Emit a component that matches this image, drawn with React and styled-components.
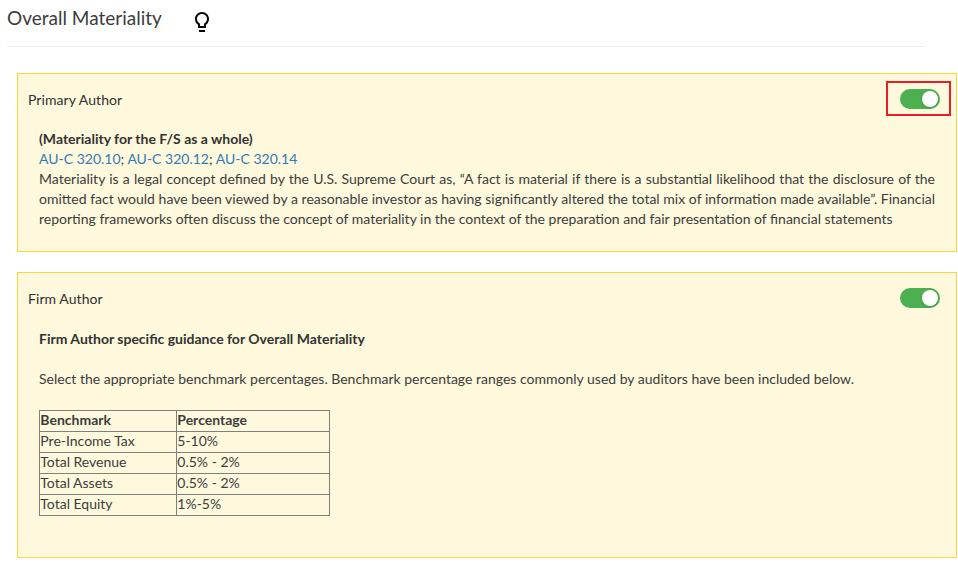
import React from "react";
import styled, { createGlobalStyle } from "styled-components";

const GlobalStyle = createGlobalStyle`
  *, *::before, *::after { box-sizing: border-box; }
  body { margin: 0; background: #fff; color: #3c3c3c; font: 14px/20px Lato, sans-serif; overflow: hidden; }
`;
const Page = styled.main`
  width: 958px;
  height: 562px;
`;
const Header = styled.header`
  display: flex;
  width: 918px;
  height: 47px;
  margin-left: 7px;
  border-bottom: 1px solid #eee;
`;
const Title = styled.h1`
  margin: 5px 0 0;
  width: 183px;
  font-size: 19px;
  line-height: 25px;
  font-weight: 400;
`;
const BulbIcon = styled.svg`
  width: 24px;
  height: 24px;
  margin-top: 10px;
`;
const Panels = styled.div`
  display: flex;
  flex-direction: column;
  gap: 20px;
  margin: 26px 1px 0 17px;
`;
const Panel = styled.section`
  height: ${(p) => p.$height}px;
  border: 1px solid #ffd43b;
  background: #fef8dc;
`;
const PanelHead = styled.div`
  display: flex;
  justify-content: space-between;
  align-items: center;
  height: 35px;
  margin: 7px 5px 0 10px;
`;
const Author = styled.h2`
  margin: 3px 0 0;
  color: #303030;
  font-size: 14px;
  line-height: 20px;
  font-weight: 400;
  letter-spacing: 0.07px;
`;
const ToggleFrame = styled.div`
  display: flex;
  align-items: center;
  justify-content: center;
  width: 65px;
  height: 35px;
  border: 2px solid ${(p) => (p.$highlight ? "#ed1c24" : "transparent")};
`;
const Toggle = styled.button`
  display: flex;
  justify-content: flex-end;
  width: 40px;
  height: 20px;
  margin: 0 0 0 3px;
  padding: 2px;
  border: 0;
  border-radius: 10px;
  background: #4caf50;
`;
const Knob = styled.span`
  width: 16px;
  height: 16px;
  border-radius: 50%;
  background: #fff;
  box-shadow: 0 1px 3px rgba(0, 0, 0, 0.15);
`;
const Body = styled.div`
  margin: ${(p) => p.$top}px 21px 0;
`;
const Strong = styled.div`
  color: #333;
  font-weight: 700;
`;
const Link = styled.a`
  color: #337ab7;
`;
const Text = styled.p`
  margin: ${(p) => p.$gap || 0}px 0 0;
  text-align: justify;
`;
const Table = styled.table`
  width: 291px;
  margin-top: 21px;
  border-collapse: collapse;
  table-layout: fixed;
`;
const Cell = styled.td`
  height: 21px;
  padding: 0 0 2px 0.3px;
  border: 1px solid #808080;
  line-height: 18px;
  font-weight: ${(p) => (p.$bold ? 700 : 400)};
  width: ${(p) => p.$width}px;
`;

const rows = [
  ["Benchmark", "Percentage"],
  ["Pre-Income Tax", "5-10%"],
  ["Total Revenue", "0.5% - 2%"],
  ["Total Assets", "0.5% - 2%"],
  ["Total Equity", "1%-5%"],
];

function AuthorHeader({ name, highlight }) {
  return (
    <PanelHead>
      <Author>{name}</Author>
      <ToggleFrame $highlight={highlight}>
        <Toggle role="switch" aria-checked="true" aria-label={name}><Knob /></Toggle>
      </ToggleFrame>
    </PanelHead>
  );
}

export default function App() {
  return (
    <Page>
      <GlobalStyle />
      <Header>
        <Title>Overall Materiality</Title>
        <BulbIcon viewBox="0 0 24 24" fill="#000">
          <path d="M9 20h6v2H9zM12 2C8.140 2 5 5.140 5 9c0 2.380 1.190 4.470 3 5.740V17c0 .55.45 1 1 1h6c.55 0 1-.45 1-1v-2.260c1.810-1.270 3-3.360 3-5.740 0-3.860-3.140-7-7-7zm2.850 11.100l-.85.6V16h-4v-2.300l-.85-.6C7.800 12.160 7 10.630 7 9c0-2.760 2.240-5 5-5s5 2.240 5 5c0 1.630-.8 3.160-2.150 4.100z" />
        </BulbIcon>
      </Header>
      <Panels>
        <Panel $height={179}>
          <AuthorHeader name="Primary Author" highlight />
          <Body $top={13}>
            <Strong>(Materiality for the F/S as a whole)</Strong>
            <div><Link>AU-C 320.10</Link>; <Link>AU-C 320.12</Link>; <Link>AU-C 320.14</Link></div>
            <Text>Materiality is a legal concept defined by the U.S. Supreme Court as, “A fact is material if there is a substantial likelihood that the disclosure of the omitted fact would have been viewed by a reasonable investor as having significantly altered the total mix of information made available”. Financial reporting frameworks often discuss the concept of materiality in the context of the preparation and fair presentation of financial statements</Text>
          </Body>
        </Panel>
        <Panel $height={286}>
          <AuthorHeader name="Firm Author" />
          <Body $top={14}>
            <Strong>Firm Author specific guidance for Overall Materiality</Strong>
            <Text $gap={20}>Select the appropriate benchmark percentages. Benchmark percentage ranges commonly used by auditors have been included below.</Text>
            <Table>
              <tbody>
                {rows.map(([name, value], i) => (
                  <tr key={name}>
                    <Cell $bold={i === 0} $width={137}>{name}</Cell>
                    <Cell $bold={i === 0} $width={153}>{value}</Cell>
                  </tr>
                ))}
              </tbody>
            </Table>
          </Body>
        </Panel>
      </Panels>
    </Page>
  );
}
